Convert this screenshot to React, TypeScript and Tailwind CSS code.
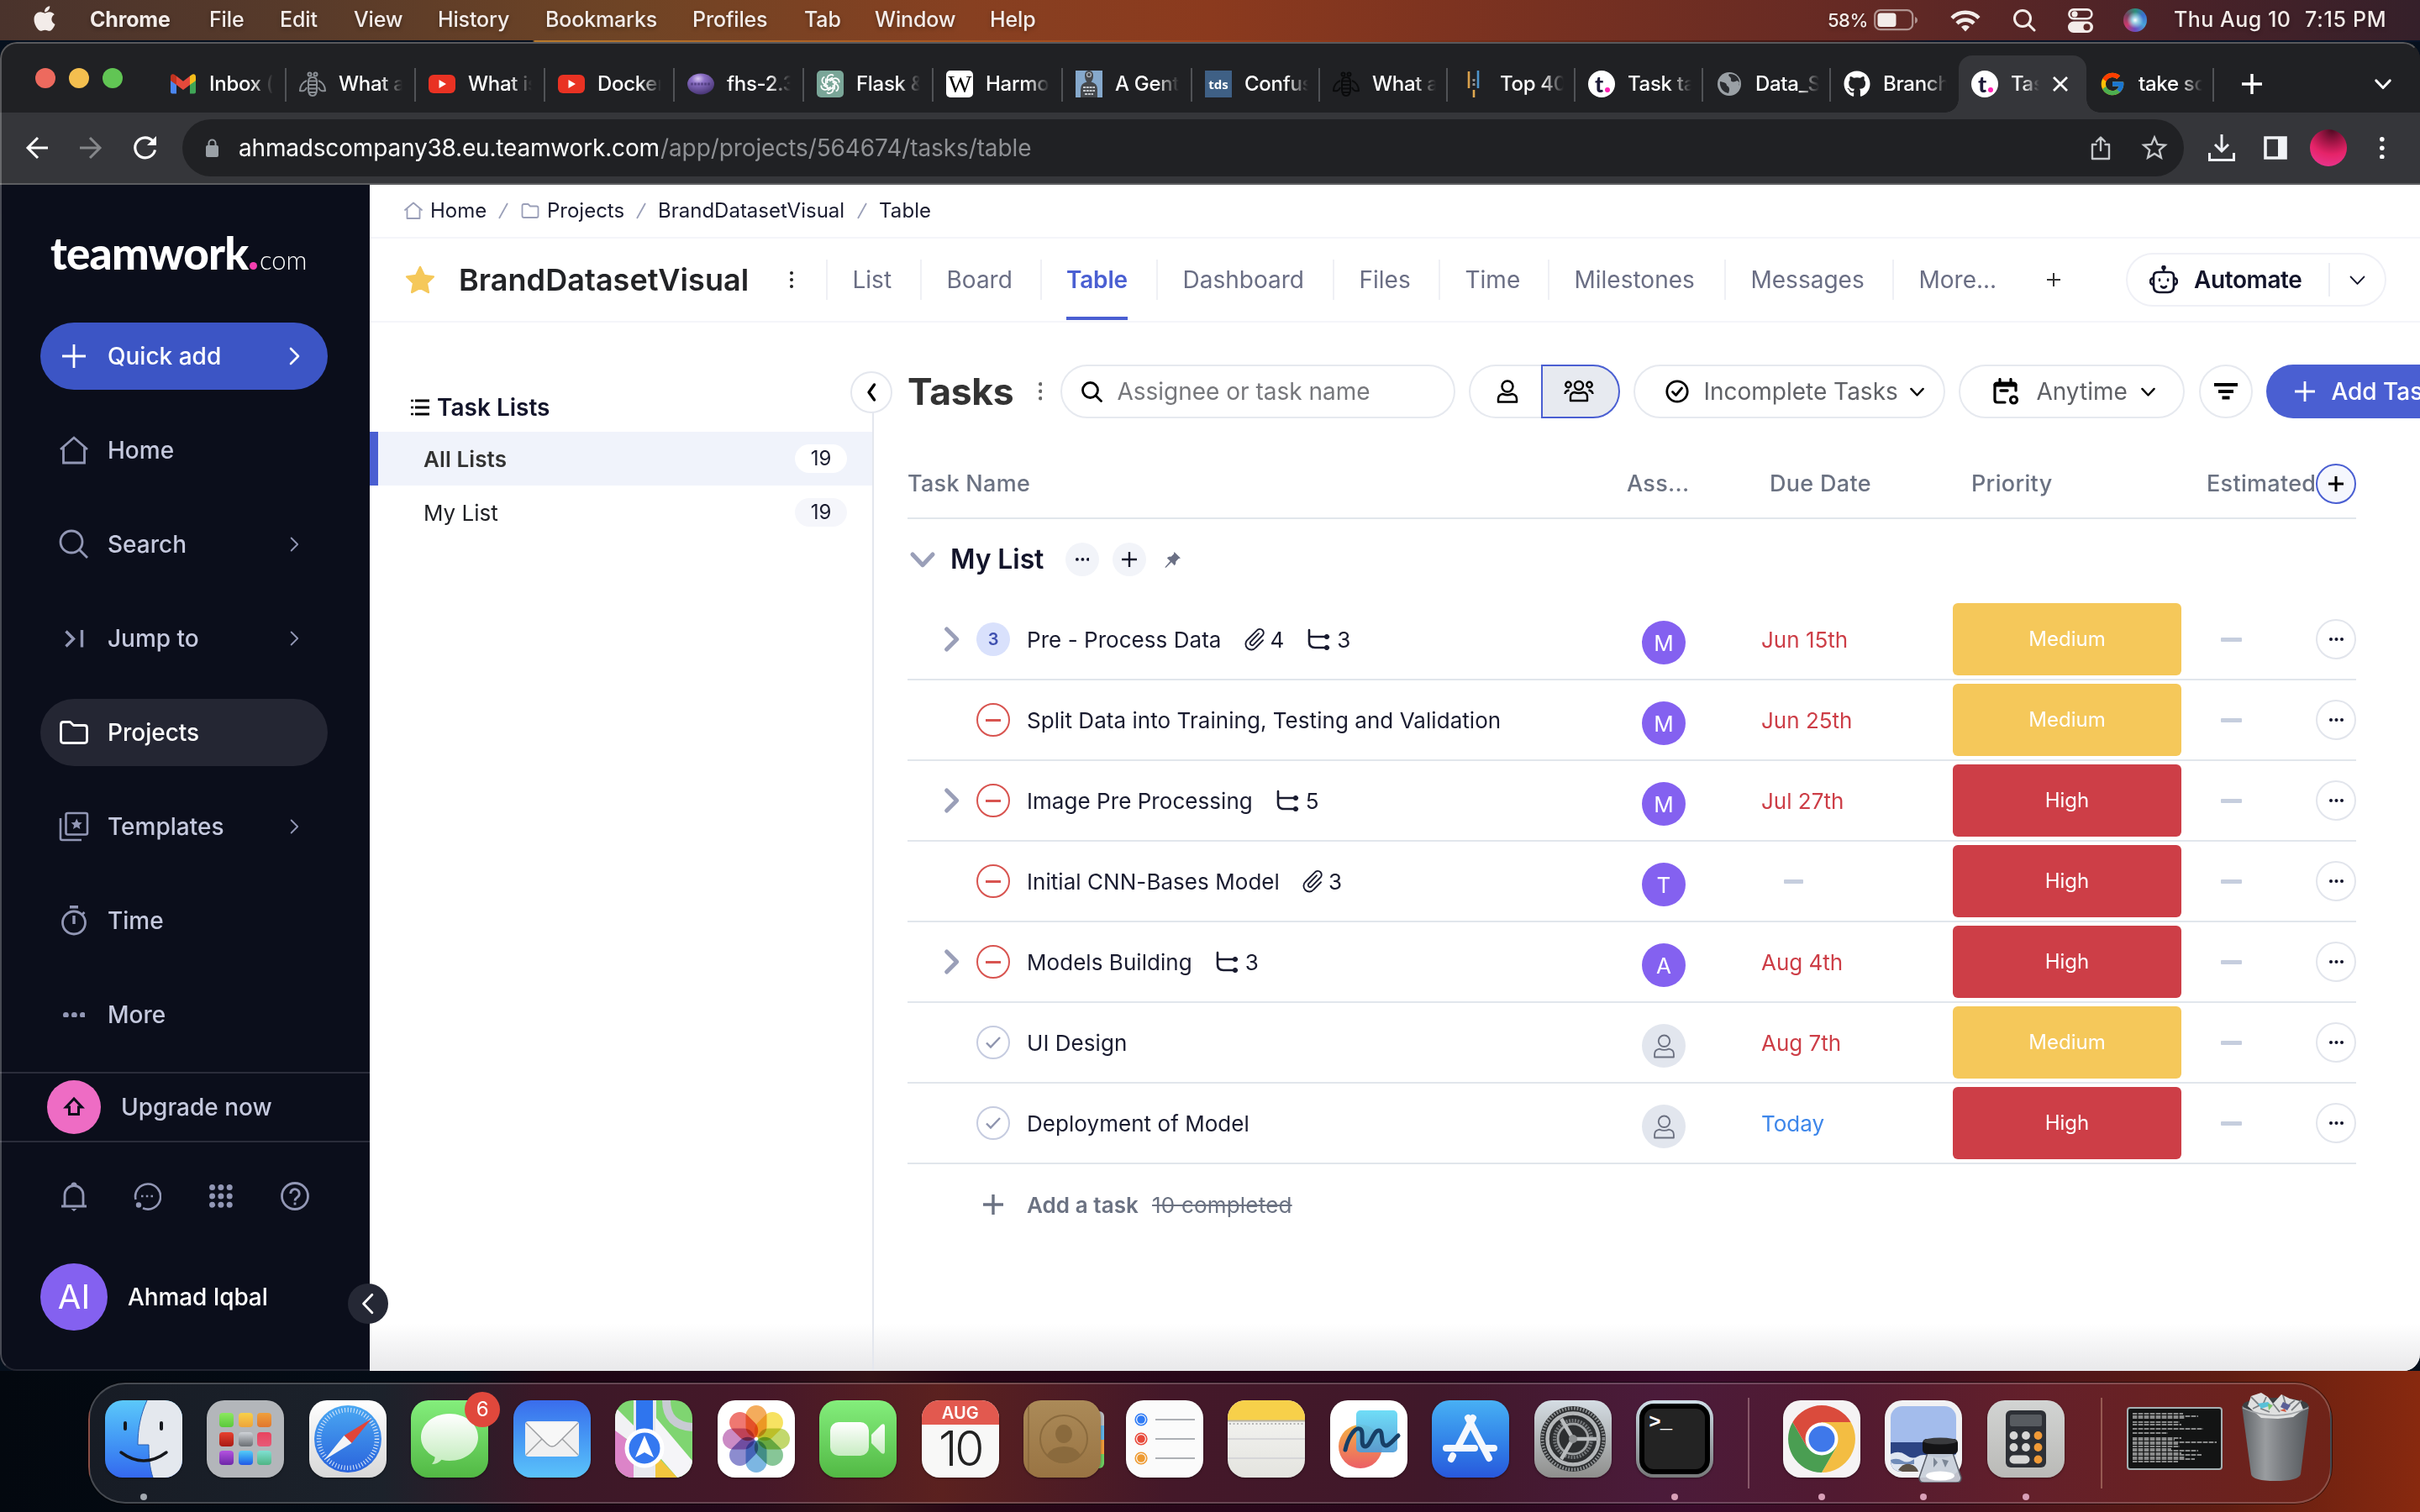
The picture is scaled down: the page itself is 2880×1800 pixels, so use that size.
import React from "react";
import { FaApple, FaGithub } from "react-icons/fa";
import { FcGoogle } from "react-icons/fc";

type Kids = { children?: React.ReactNode };

/* ---------- small drawing helpers ---------- */

function Line({
  size = 24,
  vb = 24,
  w = 2,
  className = "",
  round = true,
  children,
}: Kids & { size?: number; vb?: number; w?: number; className?: string; round?: boolean }) {
  return (
    <svg
      width={size}
      height={size}
      viewBox={`0 0 ${vb} ${vb}`}
      fill="none"
      stroke="currentColor"
      strokeWidth={w}
      strokeLinecap={round ? "round" : "butt"}
      strokeLinejoin={round ? "round" : "miter"}
      className={`block shrink-0 ${className}`}
    >
      {children}
    </svg>
  );
}

const Plus = ({ size, w, className }: { size: number; w: number; className?: string }) => (
  <Line size={size} vb={size} w={w} className={className} round={false}>
    <path d={`M${size / 2} 0V${size}M0 ${size / 2}H${size}`} />
  </Line>
);

const ChevR = ({ h, w, className }: { h: number; w: number; className?: string }) => (
  <Line size={h} vb={24} w={w} className={className}>
    <path d="M8 3l9 9-9 9" />
  </Line>
);

const ChevD = ({ size, w, className }: { size: number; w: number; className?: string }) => (
  <Line size={size} vb={24} w={w} className={className}>
    <path d="M3 7.500l9 9.500 9-9.500" />
  </Line>
);

const Dots = ({ r = 2, gap = 7, vertical = false, className = "" }: { r?: number; gap?: number; vertical?: boolean; className?: string }) => {
  const a = 2 * r;
  const b = 2 * gap + 2 * r;
  return (
    <svg width={vertical ? a : b} height={vertical ? b : a} fill="currentColor" className={`block shrink-0 ${className}`}>
      {[0, 1, 2].map((i) => (
        <circle key={i} cx={vertical ? r : r + i * gap} cy={vertical ? r + i * gap : r} r={r} />
      ))}
    </svg>
  );
};

/* ---------- macOS menu bar ---------- */

const menus = [
  { t: "Chrome", c: "w-[142px] font-bold tracking-[-0.3px]" },
  { t: "File", c: "w-[84px]" },
  { t: "Edit", c: "w-[88px]" },
  { t: "View", c: "w-[100px]" },
  { t: "History", c: "w-[128px]" },
  { t: "Bookmarks", c: "w-[175px]" },
  { t: "Profiles", c: "w-[133px]" },
  { t: "Tab", c: "w-[84px]" },
  { t: "Window", c: "w-[137px]" },
  { t: "Help", c: "w-[80px]" },
];

function MenuBar() {
  return (
    <header className="flex h-12 shrink-0 items-center bg-[linear-gradient(90deg,#4a332c_0%,#573a2a_12%,#6f4425_26%,#874021_40%,#8b3a1e_50%,#7d3320_60%,#662a24_76%,#4a2228_90%,#35202a_100%)] text-[25px] font-medium text-[#f3ece9] [text-shadow:0_2px_5px_rgba(0,0,0,0.35)]">
      <FaApple className="mb-1 ml-[38px] mr-[38px] h-[34px] w-[30px] shrink-0" />
      {menus.map((m) => (
        <div key={m.t} className={`shrink-0 pl-px tracking-[-0.15px] ${m.c}`}>
          {m.t}
        </div>
      ))}
      <div className="ml-auto flex items-center">
        <span className="w-[55px] text-[22px] tracking-[-0.5px]">58%</span>
        <svg width="53" height="26" viewBox="0 0 53 26" className="mr-[38px] block">
          <rect x="1.200" y="1.200" width="45" height="23" rx="6.500" fill="none" stroke="#f3ece9" strokeOpacity=".55" strokeWidth="2.200" />
          <rect x="4.500" y="4.500" width="22" height="16.500" rx="3.500" fill="#f3ece9" />
          <path d="M49 9q3 1.200 3 4t-3 4z" fill="#f3ece9" fillOpacity=".55" />
        </svg>
        <svg width="36" height="27" viewBox="0 0 36 27" className="mr-[38px] block" fill="none" stroke="#f3ece9" strokeWidth="4.600">
          <path d="M2 10.500a22.500 22.500 0 0 1 32 0" />
          <path d="M8 16.800a14 14 0 0 1 20 0" />
          <path d="M18 26.500l-5-5.500a7.500 7.500 0 0 1 10 0z" fill="#f3ece9" stroke="none" />
        </svg>
        <Line size={28} vb={28} w={3} className="mr-[38px]">
          <circle cx="12" cy="12" r="9.500" />
          <path d="M19 19l7 7" />
        </Line>
        <svg width="30" height="29" viewBox="0 0 30 29" className="mr-[36px] block">
          <rect x="1.400" y="1.400" width="27" height="10.800" rx="5.400" fill="none" stroke="#f3ece9" strokeWidth="2.600" />
          <circle cx="8" cy="6.800" r="3.600" fill="#f3ece9" />
          <rect x="0" y="15.500" width="30" height="13.500" rx="6.700" fill="#f3ece9" />
          <circle cx="22.500" cy="22.200" r="4" fill="#5b2726" />
        </svg>
        <div className="mr-[32px] h-7 w-7 rounded-full bg-[radial-gradient(circle_at_50%_50%,#ffffff_0%,#9fd4e6_18%,transparent_50%),conic-gradient(from_0deg,#2c8f7a,#3b6fd0,#4aa3d8,#6b4bc0,#c93a6b,#7a4060,#2c8f7a)]" />
        <span className="w-[156px] whitespace-nowrap tracking-[0.5px]">Thu Aug 10</span>
        <span className="w-[137px] whitespace-nowrap tracking-[0.7px]">7:15 PM</span>
      </div>
    </header>
  );
}

/* ---------- favicons ---------- */

const Gmail = () => (
  <svg width="32" height="32" viewBox="0 0 32 32">
    <path d="M1 8v17.500q0 2 2 2h5V13z" fill="#4a86f0" />
    <path d="M31 8v17.500q0 2-2 2h-5V13z" fill="#3fa556" />
    <path d="M24 6.500l3-2q4-1 4 3.500v4l-7 5z" fill="#f5bd1b" />
    <path d="M8 6.500l-3-2Q1 3.500 1 8v4l7 5z" fill="#c2331f" />
    <path d="M8 6.500l8 6.200 8-6.200V17l-8 6-8-6z" fill="#e6493b" />
  </svg>
);
const Bee = ({ c }: { c: string }) => (
  <svg width="32" height="32" viewBox="0 0 32 32" fill="none" stroke={c} strokeWidth="2">
    <circle cx="12.500" cy="4.500" r="2" />
    <circle cx="19.500" cy="4.500" r="2" />
    <path d="M11 13q0-5 5-5t5 5v9q0 8-5 8t-5-8z" />
    <path d="M11 12.500h10M11 17h10M11 21.500h10M12 26h8" />
    <path d="M9 12c-5 2-8 7-8 12 4 1 7-1 8-4M23 12c5 2 8 7 8 12-4 1-7-1-8-4" />
  </svg>
);
const YouTube = () => (
  <svg width="32" height="32" viewBox="0 0 32 32">
    <rect x="0" y="5" width="32" height="22" rx="6" fill="#e93223" />
    <path d="M12.500 11l8.500 5-8.500 5z" fill="#fff" />
  </svg>
);
const Eclipse = () => (
  <svg width="32" height="32" viewBox="0 0 32 32">
    <defs>
      <radialGradient id="ecl" cx=".4" cy=".25" r=".8">
        <stop offset="0" stopColor="#d9c8f2" />
        <stop offset=".3" stopColor="#8c70c6" />
        <stop offset="1" stopColor="#43316f" />
      </radialGradient>
    </defs>
    <ellipse cx="16" cy="16" rx="16" ry="12.500" fill="url(#ecl)" />
    <path d="M4 16h24" stroke="#2e2156" strokeWidth="3" strokeDasharray="3 1" opacity=".45" />
  </svg>
);
const Knot = () => (
  <svg width="32" height="32" viewBox="0 0 32 32">
    <rect width="32" height="32" rx="5" fill="#7aa698" />
    <g fill="none" stroke="#fff" strokeWidth="1.700">
      {[0, 60, 120, 180, 240, 300].map((a) => (
        <path key={a} d="M12.500 15V9.500a4.600 4.600 0 0 1 7.500-3.500M12.500 12l6.500-3.700" transform={`rotate(${a} 16 16)`} />
      ))}
    </g>
  </svg>
);
const Wiki = () => (
  <div className="flex h-8 w-8 items-center justify-center rounded-[5px] bg-white font-['Liberation_Serif',serif] text-[30px] leading-none tracking-[-1px] text-black">W</div>
);
const Person = () => (
  <svg width="32" height="32" viewBox="0 0 32 32">
    <rect width="32" height="32" fill="#86a9cc" />
    <path d="M11 6q0-6 5-6t5 6q0 5-2.500 7.500 7.500 1.500 7.500 9V32H6V22.500q0-7.500 7.500-9Q11 11 11 6z" fill="#45484c" />
    <circle cx="16" cy="5" r="2.500" fill="none" stroke="#b9bec4" strokeWidth="1.200" />
    <path d="M9 20h14M9 24h14M11 28h10" stroke="#c4c8cc" strokeWidth="2" strokeDasharray="3 .8" />
  </svg>
);
const Tds = () => (
  <div className="flex h-8 w-8 items-center justify-center bg-[#3f6085] font-['Open_Sans',sans-serif] text-[15px] font-bold text-white">tds</div>
);
const Bars = () => (
  <svg width="32" height="32" viewBox="0 0 32 32" strokeWidth="2.600">
    <path d="M10 1v20" stroke="#d9a04b" />
    <path d="M16 23v9M16 10v2M16 16v2" stroke="#e0a950" />
    <path d="M21 0v21" stroke="#4d95cc" />
    <path d="M16 10v8" stroke="#8d9299" strokeDasharray="3 2" />
  </svg>
);
const TeamworkFav = () => (
  <div className="relative flex h-8 w-8 items-center justify-center rounded-full bg-white pb-0.5 pr-1.5 font-['Lato',sans-serif] text-[27px] font-black leading-none text-[#1d1c39]">
    t<span className="absolute bottom-[6px] right-[6px] h-[6px] w-[6px] rounded-full bg-[#ff22b1]" />
  </div>
);
const Globe = () => (
  <svg width="32" height="32" viewBox="0 0 32 32">
    <circle cx="16" cy="16" r="14" fill="#9aa0a5" />
    <path d="M5 13c4 1 8 1 8 5 3 1 4 4 2 9-7-1-11-8-10-14zM16 4c-3 3 3 3 2 7-1 3 5 3 7 1 3 1 4 4 2 6C30 12 26 4 16 4z" fill="#2a2c30" />
  </svg>
);

const tabs: { icon: React.ReactNode; t: string; active?: boolean; noSep?: boolean }[] = [
  { icon: <Gmail />, t: "Inbox (" },
  { icon: <Bee c="#8b9096" />, t: "What a" },
  { icon: <YouTube />, t: "What is" },
  { icon: <YouTube />, t: "Docker" },
  { icon: <Eclipse />, t: "fhs-2.3" },
  { icon: <Knot />, t: "Flask &" },
  { icon: <Wiki />, t: "Harmo" },
  { icon: <Person />, t: "A Gent" },
  { icon: <Tds />, t: "Confus" },
  { icon: <Bee c="#0a0b0c" />, t: "What a" },
  { icon: <Bars />, t: "Top 40" },
  { icon: <TeamworkFav />, t: "Task ta" },
  { icon: <Globe />, t: "Data_S" },
  { icon: <FaGithub className="h-8 w-8 text-white" />, t: "Branch", noSep: true },
  { icon: <TeamworkFav />, t: "Tas", active: true, noSep: true },
  { icon: <FcGoogle className="h-8 w-8" />, t: "take sc" },
];

function TabStrip() {
  return (
    <div className="flex h-[84px] shrink-0 items-end bg-[#202124] pl-[42px]">
      <div className="mb-[29px] flex w-[145px] shrink-0 gap-4">
        <span className="h-6 w-6 rounded-full bg-[#ed6a5e]" />
        <span className="h-6 w-6 rounded-full bg-[#f4bf4f]" />
        <span className="h-6 w-6 rounded-full bg-[#61c554]" />
      </div>
      {tabs.map((tab, i) => (
        <div
          key={i}
          className={`relative flex h-[68px] shrink-0 items-center pl-[15px] text-[24px] text-white ${i < 8 ? "w-[154px]" : "w-[152px]"} ${tab.active ? "rounded-t-[16px] bg-[#35363a]" : ""}`}
        >
          {tab.active && (
            <>
              <span className="absolute -left-4 bottom-0 h-4 w-4 bg-[radial-gradient(circle_at_0_0,transparent_15.5px,#35363a_16px)]" />
              <span className="absolute -right-4 bottom-0 h-4 w-4 bg-[radial-gradient(circle_at_100%_0,transparent_15.5px,#35363a_16px)]" />
            </>
          )}
          <span className="flex h-8 w-8 shrink-0 items-center justify-center">{tab.icon}</span>
          <span
            className={`ml-[15px] overflow-hidden whitespace-nowrap font-medium tracking-[-0.3px] ${
              tab.active
                ? "w-[34px] [mask-image:linear-gradient(90deg,#000_40%,transparent)]"
                : "w-[76px] [mask-image:linear-gradient(90deg,#000_65%,transparent)]"
            }`}
          >
            {tab.t}
          </span>
          {tab.active && (
            <Line size={18} vb={18} w={2.8} className="ml-[16px]" round={false}>
              <path d="M1 1l16 16M17 1L1 17" />
            </Line>
          )}
          {!tab.noSep && <span className="absolute right-0 top-[15px] h-10 w-0.5 bg-[#505256]" />}
        </div>
      ))}
      <div className="mb-[22px] ml-[33px] flex flex-1 items-center justify-between pr-[33px] text-white">
        <Plus size={24} w={3.4} />
        <ChevD size={22} w={3.2} />
      </div>
    </div>
  );
}

function Toolbar() {
  return (
    <div className="flex h-[86px] shrink-0 items-center border-b-2 border-[#5c5d60] bg-[#35363a] pl-[30px]">
      <Line size={28} vb={28} w={3} round={false} className="mr-9 text-white">
        <path d="M27 14H3M15 2L3 14l12 12" />
      </Line>
      <Line size={28} vb={28} w={3} round={false} className="mr-9 text-[#85878a]">
        <path d="M1 14h24M13 2l12 12-12 12" />
      </Line>
      <Line size={30} vb={30} w={3.2} round={false} className="mr-[29px] text-white">
        <path d="M26.500 17.500A12 12 0 1 1 24 7.200" />
        <path d="M28 1v11H17z" fill="currentColor" stroke="none" />
      </Line>
      <div className="flex h-[68px] w-[2382px] items-center rounded-full bg-[#202124] pl-7">
        <svg width="15" height="22" viewBox="0 0 15 22" className="mr-[24px] shrink-0">
          <path d="M3.500 10V5.500a4 4 0 0 1 8 0V10" fill="none" stroke="#9aa0a6" strokeWidth="2" />
          <rect x="0" y="8" width="15" height="14" rx="2" fill="#9aa0a6" />
        </svg>
        <div className="flex text-[28px] text-[#8f9195]">
          <span className="w-[502px] whitespace-nowrap tracking-[-0.18px] text-white">ahmadscompany38.eu.teamwork.com</span>
          <span className="whitespace-nowrap tracking-[-0.1px]">/app/projects/564674/tasks/table</span>
        </div>
        <Line size={30} vb={30} w={2.4} className="ml-auto mr-[33px] text-[#c5c8cb]">
          <path d="M15 18V3M10 7.500l5-5 5 5M9.500 11H5v17h20V11h-4.500" />
        </Line>
        <Line size={32} vb={32} w={2.4} round={false} className="mr-[19px] text-[#c5c8cb]">
          <path d="M16 3.500l3.600 8.400 9.200.8-7 6 2.100 9-7.900-4.800-7.900 4.800 2.100-9-7-6 9.200-.8z" />
        </Line>
      </div>
      <Line size={32} vb={32} w={3} round={false} className="ml-[29px] text-[#eef0f6]">
        <path d="M16 0v19M8 12l8 8 8-8" strokeWidth="3" />
        <path d="M1.500 22v8.500h29V22" />
      </Line>
      <svg width="28" height="28" viewBox="0 0 28 28" className="ml-[34px]">
        <path d="M2 2h24v24H2z" fill="none" stroke="#f1f3f6" strokeWidth="3.600" />
        <path d="M17 2h9v24h-9z" fill="#f1f3f6" />
      </svg>
      <div className="ml-[27px] h-11 w-11 rounded-full bg-[radial-gradient(circle_at_60%_0%,#4d0b22_0%,#a01545_30%,#e52368_58%,#ea3c9c_100%)]" />
      <Dots r={2.8} gap={10.5} vertical className="ml-[39px] text-white" />
    </div>
  );
}

/* ---------- Teamwork sidebar ---------- */

const navIcons: Record<string, React.ReactNode> = {
  Home: (
    <Line size={36} vb={36} w={2.8} round={false}>
      <path d="M2 17L18 3l16 14M5.500 14.500V33h25V14.500" />
    </Line>
  ),
  Search: (
    <Line size={36} vb={36} w={2.8} round={false}>
      <circle cx="15" cy="15" r="13" />
      <path d="M24.500 24.500L34 34" />
    </Line>
  ),
  "Jump to": (
    <Line size={36} vb={36} w={3.4} round={false}>
      <path d="M8.500 9.500l9 9-9 9M27.500 8v20.500" />
    </Line>
  ),
  Projects: (
    <Line size={36} vb={36} w={2.8}>
      <path d="M2.500 8.500q0-3 3-3h8l4 4h13q3 0 3 3v15q0 3-3 3h-25q-3 0-3-3z" />
    </Line>
  ),
  Templates: (
    <Line size={36} vb={36} w={2.6} round={false}>
      <rect x="8.500" y="2" width="25.500" height="25.500" rx="2" />
      <path d="M2 8v24q0 2 2 2h23" />
      <path d="M21.200 8.500l2 4.400 4.600.4-3.500 3.100 1.100 4.600-4.200-2.500-4.200 2.500 1.100-4.600-3.500-3.100 4.600-.4z" fill="currentColor" stroke="none" />
    </Line>
  ),
  Time: (
    <Line size={36} vb={36} w={2.8} round={false}>
      <circle cx="18" cy="20.500" r="13.500" />
      <path d="M13 1.800h10M18 12v10" strokeWidth="3.400" />
      <path d="M27.500 11l3-3" />
    </Line>
  ),
  More: <Dots r={3.4} gap={10} />,
};

const nav: { t: string; arrow?: boolean; active?: boolean }[] = [
  { t: "Home" },
  { t: "Search", arrow: true },
  { t: "Jump to", arrow: true },
  { t: "Projects", active: true },
  { t: "Templates", arrow: true },
  { t: "Time" },
  { t: "More" },
];

function Sidebar() {
  return (
    <aside className="relative flex w-[440px] shrink-0 flex-col bg-[#0b0e1b] text-[28px] font-medium text-[#c5c9de]">
      <div className="ml-[60px] mt-[51px] flex h-[60px] items-baseline font-['Lato',sans-serif] leading-[60px] text-white">
        <span className="w-[237px] text-[53px] font-black tracking-[-0.8px]">teamwork</span>
        <span className="mr-[3px] h-[9px] w-[9px] rounded-full bg-[#f43fb0]" />
        <span className="text-[31px] font-light">com</span>
      </div>
      <div className="ml-12 mt-[53px] flex h-20 w-[342px] shrink-0 items-center rounded-full bg-[#3c55c5] text-white">
        <span className="flex w-20 justify-center">
          <Plus size={28} w={2.8} />
        </span>
        <span className="flex-1">Quick add</span>
        <ChevR h={24} w={2.6} className="mr-7" />
      </div>
      <div className="mt-8 flex flex-col gap-8">
        {nav.map((n) => (
          <div key={n.t} className={`ml-12 flex h-20 w-[342px] items-center rounded-full ${n.active ? "bg-[#242633] text-white" : ""}`}>
            <span className={`flex w-20 justify-center ${n.active ? "" : "text-[#9297b5]"}`}>{navIcons[n.t]}</span>
            <span className="flex-1">{n.t}</span>
            {n.arrow && <ChevR h={20} w={2.2} className="mr-[30px] text-[#9297b5]" />}
          </div>
        ))}
      </div>
      <div className="mt-[28px] flex h-[84px] items-center border-y-2 border-[#2a2c3a] pl-14">
        <span className="flex h-16 w-16 items-center justify-center rounded-full bg-[#ee6cc4] text-[#0b0e1b]">
          <Line size={28} vb={28} w={3} round={false}>
            <path d="M14 4L4.500 14H8.500v8.500h11V14h4z" />
          </Line>
        </span>
        <span className="ml-[24px]">Upgrade now</span>
      </div>
      <div className="mt-[44px] flex h-10 items-center text-[#9297b5]">
        <span className="ml-11 flex w-[87px] justify-center">
          <Line size={36} vb={36} w={2.8} round={false}>
            <path d="M3 30h30M7 29.500V16.500a11 11 0 0 1 22 0v13" />
            <path d="M14.500 5a3.500 3.500 0 0 1 7 0zM14.500 33h7l-3.500 3z" fill="currentColor" stroke="none" />
          </Line>
        </span>
        <span className="flex w-[87px] justify-center">
          <Line size={34} vb={34} w={2.6} round={false}>
            <path d="M12 31.200A15 15 0 1 0 3.500 21" />
            <circle cx="7" cy="27.500" r="3.200" fill="currentColor" stroke="none" />
            <path d="M10 17h2.500M15.800 17h2.500M21.500 17H24" />
          </Line>
        </span>
        <span className="flex w-[90px] justify-center">
          <svg width="28" height="28" viewBox="0 0 28 28" fill="currentColor">
            {[0, 1, 2].map((r) => [0, 1, 2].map((c) => <circle key={`${r}${c}`} cx={3.6 + c * 10.3} cy={3.6 + r * 10.3} r="3.500" />))}
          </svg>
        </span>
        <span className="flex w-[86px] justify-center">
          <Line size={36} vb={36} w={2.8} round={false}>
            <circle cx="18" cy="18" r="15.500" />
            <path d="M12.800 15a5.200 5.200 0 1 1 8.400 4c-2 1.500-3.200 2.200-3.200 4.500M18 25.500v3" />
          </Line>
        </span>
      </div>
      <div className="ml-12 mt-[60px] flex h-20 items-center text-white">
        <span className="flex h-20 w-20 items-center justify-center rounded-full bg-[#8461f0] text-[40px] font-normal">AI</span>
        <span className="ml-[24px] tracking-[-0.1px]">Ahmad Iqbal</span>
      </div>
      <span className="absolute -right-[22px] top-[1308px] z-10 flex h-12 w-12 items-center justify-center rounded-full bg-[#252835] text-white">
        <Line size={26} vb={24} w={2.6}>
          <path d="M16.500 2L7 12l9.500 10" />
        </Line>
      </span>
    </aside>
  );
}

/* ---------- Project header ---------- */

function Breadcrumb() {
  const slash = (
    <svg width="12" height="20" viewBox="0 0 12 20" fill="none" stroke="#9a9fb8" strokeWidth="1.800" className="shrink-0">
      <path d="M11 1L1 19" />
    </svg>
  );
  return (
    <div className="flex h-16 shrink-0 items-center border-b-2 border-[#f4f5fa] pl-[41px] text-[24px] text-[#1a1c30]">
      <Line size={22} vb={22} w={1.8} className="mr-[9px] text-[#9a9fb8]">
        <path d="M1 10l10-8.500L21 10M3.500 8.500V20h15V8.500" />
      </Line>
      <span className="w-[81px]">Home</span>
      {slash}
      <Line size={22} vb={22} w={1.8} className="ml-[15px] mr-[9px] text-[#9a9fb8]">
        <path d="M1.500 5q0-2 2-2h5l2.500 2.500h7.500q2 0 2 2v9.500q0 2-2 2h-15q-2 0-2-2z" />
      </Line>
      <span className="w-[106px]">Projects</span>
      {slash}
      <span className="ml-[14px] w-[237px]">BrandDatasetVisual</span>
      {slash}
      <span className="ml-[14px] tracking-[0.1px]">Table</span>
    </div>
  );
}

const projectTabs = [
  { t: "List", c: "w-[112px]" },
  { t: "Board", c: "w-[143px]" },
  { t: "Table", c: "w-[138px]", active: true },
  { t: "Dashboard", c: "w-[210px]" },
  { t: "Files", c: "w-[126px]" },
  { t: "Time", c: "w-[130px]" },
  { t: "Milestones", c: "w-[210px]" },
  { t: "Messages", c: "w-[200px]" },
  { t: "More...", c: "w-[122px]" },
];

function ProjectHeader() {
  return (
    <div className="flex h-[100px] shrink-0 items-center border-b-2 border-[#f4f5fa]">
      <svg width="36" height="34" viewBox="0 0 36 34" className="ml-[42px] mr-[28px] block shrink-0">
        <path d="M18 2l4.800 10 11 1.400-8 7.700 2 10.900L18 26.700 8.200 32l2-10.900-8-7.700 11-1.400z" fill="#f5c85a" stroke="#f5c85a" strokeWidth="2.500" strokeLinejoin="round" />
      </svg>
      <span className="w-[394px] whitespace-nowrap text-[36px] font-semibold tracking-[0.06px] text-[#222326]">BrandDatasetVisual</span>
      <Dots r={2} gap={8} vertical className="mr-[39px] text-[#222]" />
      {projectTabs.map((p) => (
        <div key={p.t} className={`flex h-12 shrink-0 items-center whitespace-nowrap border-l-2 border-[#eff0f5] text-[28px] ${p.c} ${p.active ? "pl-[29px]" : "pl-[29.5px]"}`}>
          <span className={p.active ? "relative font-semibold tracking-[-0.2px] text-[#4a5fd2]" : "text-[#6a6e84]"}>
            {p.t}
            {p.active && <span className="absolute -bottom-[27px] left-0 h-1 w-full bg-[#4a5fd2]" />}
          </span>
        </div>
      ))}
      <Plus size={16} w={2} className="ml-[62px] text-[#333]" />
      <div className="ml-auto mr-[40px] flex h-16 w-[310px] items-center rounded-full border-2 border-[#eff0f6] text-[#12142a]">
        <Line size={34} vb={34} w={2.6} className="ml-[26px] mr-[19px]">
          <path d="M17 2v6M10 8h14q5 0 5 5v12q0 7-7 7H12q-7 0-7-7V13q0-5 5-5zM4 15q-3 1-3 4t3 4M30 15q3 1 3 4t-3 4M14 25q3 3 6 0M12 16.500v1.500M22 16.500v1.500" />
          <circle cx="17" cy="2.500" r="1.500" fill="currentColor" />
        </Line>
        <span className="w-[160px] text-[28px] font-semibold tracking-[-0.4px]">Automate</span>
        <span className="h-10 w-0.5 bg-[#ebedf3]" />
        <ChevD size={21} w={2.2} className="ml-[22px]" />
      </div>
    </div>
  );
}

/* ---------- Task lists panel ---------- */

function TaskLists() {
  return (
    <div className="flex w-[598px] shrink-0 flex-col pt-[72px]">
      <div className="flex h-[58px] items-center pl-[49px] text-[28px] font-semibold text-[#12142a]">
        <svg width="22" height="20" viewBox="0 0 22 20" className="mr-[9px]" stroke="#000" strokeWidth="3.200">
          <path d="M5 2h17M5 10h17M5 18h17" />
          <path d="M0 2h3M0 10h3M0 18h3" strokeWidth="2.500" />
        </svg>
        Task Lists
      </div>
      <div className="flex h-16 items-center border-l-[10px] border-[#4a5fd2] bg-[#f0f3fb] pl-[54px] pr-[30px] text-[26px] font-semibold text-[#333]">
        <span className="flex-1 tracking-[0.1px]">All Lists</span>
        <span className="flex h-[34px] w-[62px] items-center justify-center rounded-full bg-white text-[24px] font-normal text-[#1a1c30]">19</span>
      </div>
      <div className="flex h-16 items-center pl-16 pr-[30px] text-[26px] text-[#1f2024]">
        <span className="flex-1">My List</span>
        <span className="flex h-[34px] w-[62px] items-center justify-center rounded-full bg-[#f5f6fb] text-[24px] text-[#1a1c30]">19</span>
      </div>
    </div>
  );
}

/* ---------- Task table ---------- */

const User = ({ size, w, className }: { size: number; w: number; className?: string }) => (
  <Line size={size} vb={28} w={w} className={className}>
    <circle cx="14" cy="8" r="6.500" />
    <path d="M3 26.500V23q0-5 5.500-6 5.500 2.500 11 0 5.500 1 5.500 6v3.500z" />
  </Line>
);

function Filters() {
  const pill = "flex h-16 shrink-0 items-center rounded-full border-2 border-[#e6e9ef]";
  return (
    <div className="flex h-16 shrink-0 items-center text-[28px] text-[#5f6166]">
      <span className="w-[156px] shrink-0 text-[44.5px] font-bold tracking-[-0.3px] text-[#333]">Tasks</span>
      <Dots r={2.2} gap={8.5} vertical className="mr-[22px] text-[#666]" />
      <div className={`${pill} w-[470px] pl-[23px]`}>
        <Line size={25} vb={25} w={2.8} className="mr-[17px] text-black">
          <circle cx="10.500" cy="10.500" r="9" />
          <path d="M17.500 17.500l6 6" />
        </Line>
        <span className="text-[#76777b]">Assignee or task name</span>
      </div>
      <div className="ml-4 flex h-16 w-[180px] shrink-0 text-black">
        <span className="flex w-[86px] items-center justify-center rounded-l-full border-y-2 border-l-2 border-[#e6e9ef] pl-1">
          <User size={28} w={2.5} />
        </span>
        <span className="flex flex-1 items-center justify-center rounded-r-full border-2 border-[#4a5fd2] bg-[#e7eaf0] pr-1">
          <svg width="36" height="28" viewBox="0 0 36 28" fill="none" stroke="#000" strokeWidth="2.400" strokeLinejoin="round">
            <circle cx="18" cy="7" r="5" />
            <circle cx="5.500" cy="6" r="3.200" />
            <circle cx="30.500" cy="6" r="3.200" />
            <path d="M8 25v-5q0-4 4.500-5 5.500 2 11 0 4.500 1 4.500 5v5zM1.500 17q0-3.500 5-4.500M34.500 17q0-3.500-5-4.500" />
          </svg>
        </span>
      </div>
      <div className={`${pill} ml-4 w-[371px] pl-[36px]`}>
        <Line size={28} vb={28} w={2.8} className="mr-[17px] text-black">
          <circle cx="14" cy="14" r="12.200" />
          <path d="M8.500 14.500l4 4 7-8.500" />
        </Line>
        <span className="w-[245px] whitespace-nowrap">Incomplete Tasks</span>
        <ChevD size={19} w={3} className="text-black" />
      </div>
      <div className={`${pill} ml-4 w-[269px] pl-[38px]`}>
        <Line size={32} vb={32} w={3.2} className="mr-[20px] text-black">
          <path d="M28 15V9q0-3-3-3H6Q3 6 3 9v17q0 3 3 3h9M9 1.500v4M22 1.500v4" />
          <path d="M4 8h23" strokeWidth="5" />
          <path d="M10 15h8" strokeWidth="3.400" />
          <circle cx="25.500" cy="26" r="4" />
        </Line>
        <span className="w-[124px] whitespace-nowrap">Anytime</span>
        <ChevD size={19} w={3} className="text-black" />
      </div>
      <div className={`${pill} ml-[17px] w-16 justify-center`}>
        <svg width="28" height="20" viewBox="0 0 28 20" stroke="#000" strokeWidth="3.800">
          <path d="M0 2h28M5 10h18M9.500 17.500h9" />
        </svg>
      </div>
      <div className="ml-4 flex h-16 w-[280px] shrink-0 items-center rounded-l-full bg-[#4a5fd2] pl-[34px] text-white">
        <Plus size={24} w={2.8} className="mr-[19px]" />
        <span className="whitespace-nowrap font-medium">Add Task</span>
      </div>
    </div>
  );
}

type Task = {
  name: string;
  expand?: boolean;
  status: "num" | "stop" | "todo";
  files?: number;
  subs?: number;
  who?: string;
  due?: string;
  today?: boolean;
  high?: boolean;
};

const tasks: Task[] = [
  { name: "Pre - Process Data", expand: true, status: "num", files: 4, subs: 3, who: "M", due: "Jun 15th" },
  { name: "Split Data into Training, Testing and Validation", status: "stop", who: "M", due: "Jun 25th" },
  { name: "Image Pre Processing", expand: true, status: "stop", subs: 5, who: "M", due: "Jul 27th", high: true },
  { name: "Initial CNN-Bases Model", status: "stop", files: 3, who: "T", high: true },
  { name: "Models Building", expand: true, status: "stop", subs: 3, who: "A", due: "Aug 4th", high: true },
  { name: "UI Design", status: "todo", due: "Aug 7th" },
  { name: "Deployment of Model", status: "todo", due: "Today", today: true, high: true },
];

function Status({ kind }: { kind: Task["status"] }) {
  if (kind === "num")
    return <span className="flex h-10 w-10 items-center justify-center rounded-full bg-[#d9e1fc] text-[20px] font-semibold text-[#3f50b0]">3</span>;
  if (kind === "stop")
    return (
      <span className="flex h-10 w-10 items-center justify-center rounded-full border-2 border-[#d85450]">
        <span className="h-[3px] w-[18px] bg-[#d85450]" />
      </span>
    );
  return (
    <span className="flex h-10 w-10 items-center justify-center rounded-full border-2 border-[#c6cce0] text-[#8e94ae]">
      <Line size={20} vb={20} w={2.4} round={false}>
        <path d="M2 10.500l5 5L18 4" />
      </Line>
    </span>
  );
}

function TaskRow({ t }: { t: Task }) {
  return (
    <div className="flex h-24 shrink-0 items-center border-b-2 border-[#e1e6ec] text-[26px] text-[#1a1c30]">
      <div className="flex w-[874px] items-center">
        <span className="flex w-[82px] pl-[36px]">{t.expand && <ChevR h={32} w={3.8} className="text-[#9a9fb8]" />}</span>
        <Status kind={t.status} />
        <span className="ml-[20px] whitespace-nowrap tracking-[0.05px]">{t.name}</span>
        {t.files && (
          <span className="ml-[24px] flex items-center">
            <Line size={30} vb={24} w={1.5} className="mr-[4px]">
              <path d="M16 6.500L8 14.800a2 2 0 0 0 2.700 2.700l8.500-8.700a3.600 3.600 0 1 0-5-5.100L5.500 12.400a5.400 5.400 0 1 0 7.600 7.600L20 13" />
            </Line>
            {t.files}
          </span>
        )}
        {t.subs && (
          <span className="ml-[28px] flex items-center">
            <Line size={27} vb={27} w={2.6} className="mr-[8px]">
              <path d="M2 2v14q0 7 7 7h13M2 10h20" />
              <circle cx="23" cy="10" r="2.600" fill="currentColor" strokeWidth="1" />
              <circle cx="23" cy="23" r="2.600" fill="currentColor" strokeWidth="1" />
            </Line>
            {t.subs}
          </span>
        )}
      </div>
      <span className={`mt-2 flex h-[52px] w-[52px] items-center justify-center rounded-full ${t.who ? "bg-[#8461f0] text-white" : "bg-[#e2e6ee] text-[#6b7080]"}`}>
        {t.who ?? <User size={29} w={1.8} />}
      </span>
      <span className={`ml-[90px] w-[228px] ${t.today ? "text-[#3d86ea]" : "text-[#cd3e47]"}`}>
        {t.due ?? <span className="ml-[27px] block h-[5px] w-[23px] rounded-[1px] bg-[#c6cede]" />}
      </span>
      <span
        className={`flex h-[86px] w-[272px] items-center justify-center rounded-[6px] text-[24px] text-white ${t.high ? "bg-[#cd3e47]" : "bg-[#f5c85a]"}`}
      >
        {t.high ? "High" : "Medium"}
      </span>
      <span className="ml-[47px] h-[5px] w-[25px] rounded-[1px] bg-[#c6cede]" />
      <span className="ml-auto flex h-12 w-12 items-center justify-center rounded-full border-2 border-[#e2e5ec] text-[#12142a]">
        <Dots r={2} gap={6.5} />
      </span>
    </div>
  );
}

function TaskTable() {
  return (
    <div className="flex min-w-0 flex-1 flex-col overflow-hidden pl-[40px] pt-[50px]">
      <Filters />
      <div className="mt-[38px] flex h-[82px] w-[1724px] shrink-0 items-center border-b-2 border-[#e1e6ec] text-[27px] font-medium tracking-[0.3px] text-[#6b7282]">
        <span className="w-[856px]">Task Name</span>
        <span className="w-[170px]">Ass...</span>
        <span className="w-[240px]">Due Date</span>
        <span className="w-[280px]">Priority</span>
        <span className="w-[130px] overflow-hidden">Estimated</span>
        <span className="flex h-12 w-12 shrink-0 items-center justify-center rounded-full border-2 border-[#4a5fd2] bg-[#f5f7fd] text-black">
          <Plus size={18} w={3} />
        </span>
      </div>
      <div className="flex h-24 shrink-0 items-center">
        <ChevD size={32} w={3.8} className="ml-[2px] text-[#9a9fb8]" />
        <span className="ml-[17px] w-[137px] text-[32px] font-semibold tracking-[-0.1px] text-[#12142a]">My List</span>
        <span className="flex h-10 w-10 items-center justify-center rounded-full bg-[#f2f4f9] text-[#12142a]">
          <Dots r={1.9} gap={6.5} />
        </span>
        <span className="ml-4 flex h-10 w-10 items-center justify-center rounded-full bg-[#f2f4f9] text-[#12142a]">
          <Plus size={18} w={2.4} />
        </span>
        <svg width="19" height="19" viewBox="0 0 20 20" className="ml-[22px]" fill="#6b7085">
          <path d="M12 0l8 8-2.500.5-3.500 3.500q.5 3-1.500 5L8.500 13 2 19.500.5 20l.5-1.500L7 11.500 3 7.500q2-2 5-1.500L11.500 2.500z" />
        </svg>
      </div>
      <div className="flex w-[1724px] flex-col">
        {tasks.map((t) => (
          <TaskRow key={t.name} t={t} />
        ))}
      </div>
      <div className="flex h-24 shrink-0 items-center pl-[90px] text-[26px] text-[#6b7282]">
        <Plus size={24} w={3.4} />
        <span className="ml-[28px] w-[149px] font-semibold tracking-[0.05px]">Add a task</span>
        <span className="tracking-[0.2px] line-through">10 completed</span>
      </div>
    </div>
  );
}

/* ---------- Dock ---------- */

function Tile({ children, bg = "", badge }: Kids & { bg?: string; badge?: string }) {
  return (
    <div className={`relative h-[92px] w-[92px] rounded-[21px] shadow-[0_1px_3px_rgba(0,0,0,0.4)] ${bg}`}>
      <div className="h-full w-full overflow-hidden rounded-[21px]">{children}</div>
      {badge && (
        <span className="absolute -right-[14px] -top-[10px] flex h-[42px] w-[42px] items-center justify-center rounded-full bg-[#e0483c] text-[24px] text-white">
          {badge}
        </span>
      )}
    </div>
  );
}

const Art = ({ children }: Kids) => (
  <svg width="92" height="92" viewBox="0 0 92 92" className="block">
    {children}
  </svg>
);

const petals = ["#f29a38", "#f5dc3f", "#b4d04c", "#6cba80", "#5fa6dc", "#7373c4", "#c072b8", "#ec5a52"];
const padColors = ["from-[#8be85f] to-[#5ac93c]", "from-[#f7d04a] to-[#eda43a]", "from-[#efa03c] to-[#e0762e]", "from-[#e8412f] to-[#a81a14]", "from-[#cfd3d8] to-[#6b6f74]", "from-[#e9435e] to-[#e65a78]", "from-[#b452e0] to-[#6e28a8]", "from-[#56ccf7] to-[#2557e6]", "from-[#7fe0d2] to-[#4fb585]"];

const dockMain: { el: React.ReactNode; run?: boolean }[] = [
  {
    run: true,
    el: (
      <Tile bg="bg-gradient-to-b from-[#5cc8fa] to-[#3568ee]">
        <Art>
          <path d="M50 0C42 18 39 34 39 53h13c0 14 1 27 5 39h35V0z" fill="#e4e8ee" />
          <path d="M50 0C42 18 39 34 39 53h13c0 14 1 27 5 39" fill="none" stroke="#2a5fb0" strokeWidth="1" />
          <path d="M24 27v7M67 27v7" stroke="#15171c" strokeWidth="4" strokeLinecap="round" />
          <path d="M19 62q27 20 54 0" fill="none" stroke="#15171c" strokeWidth="3.500" strokeLinecap="round" />
        </Art>
      </Tile>
    ),
  },
  {
    el: (
      <Tile bg="bg-[#b3b6ba]">
        <div className="grid h-full grid-cols-3 place-content-center justify-center gap-x-[5px] gap-y-[5.5px] px-[15px]">
          {padColors.map((c) => (
            <span key={c} className={`h-[17px] w-[17px] rounded-[4px] bg-gradient-to-b ${c}`} />
          ))}
        </div>
      </Tile>
    ),
  },
  {
    el: (
      <Tile bg="bg-gradient-to-b from-white to-[#d8d8d8]">
        <Art>
          <defs>
            <linearGradient id="saf" x1="0" y1="0" x2="0" y2="1">
              <stop offset="0" stopColor="#4aa8f2" />
              <stop offset="1" stopColor="#2a63dc" />
            </linearGradient>
          </defs>
          <circle cx="46" cy="46" r="40" fill="url(#saf)" />
          <circle cx="46" cy="46" r="34.500" fill="none" stroke="#dfeaf8" strokeWidth="5.500" strokeDasharray="1 2.600" />
          <path d="M74 22L50.500 51 41.500 42z" fill="#e0453a" />
          <path d="M18 71l23.500-29 9 9z" fill="#f3f5f7" />
        </Art>
      </Tile>
    ),
  },
  {
    el: (
      <Tile bg="bg-gradient-to-b from-[#84ee7c] to-[#52b944]" badge="6">
        <Art>
          <defs>
            <linearGradient id="msg" x1="0" y1="0" x2="0" y2="1">
              <stop offset="0" stopColor="#fff" />
              <stop offset="1" stopColor="#c3ecbd" />
            </linearGradient>
          </defs>
          <path d="M46 16c19 0 34 12 34 28S65 72 46 72q-5 0-9.500-1.200Q32 76 25 76q4-4 3.500-8.500C18 62 12 54 12 44c0-16 15-28 34-28z" fill="url(#msg)" />
        </Art>
      </Tile>
    ),
  },
  {
    el: (
      <Tile bg="bg-gradient-to-b from-[#3a6cec] to-[#5bc3fa]">
        <Art>
          <rect x="14" y="25" width="64" height="42" rx="4" fill="#f0f0f1" />
          <path d="M15 65l22-22M77 65L55 43" stroke="#a0a2a5" strokeWidth="1.500" />
          <path d="M15 27l25 25q6 6 12 0l25-25" fill="#f7f7f7" stroke="#9c9ea2" strokeWidth="1.500" />
        </Art>
      </Tile>
    ),
  },
  {
    el: (
      <Tile bg="bg-[#7fd571]">
        <Art>
          <path d="M0 34l22 20v38H0z" fill="#dc84c8" />
          <path d="M0 8l22 22v22L0 36z" fill="#f1f1f4" />
          <path d="M22 0h27v92H22z" fill="#e8e9ee" />
          <path d="M25 0h20v50H25z" fill="#2f75ee" />
          <path d="M48 20l44 52v20H74L48 62z" fill="#f5f5f8" />
          <path d="M48 64l26 28H48z" fill="#f2c63e" />
          <path d="M61 0q0 30 31 32" fill="none" stroke="#c8cbd3" strokeWidth="10" />
          <circle cx="35" cy="57" r="21" fill="#3478f0" stroke="#fff" strokeWidth="5" />
          <path d="M35 42l11 26-11-6-11 6z" fill="#fff" />
        </Art>
      </Tile>
    ),
  },
  {
    el: (
      <Tile bg="bg-white">
        <Art>
          {petals.map((c, i) => (
            <rect key={c} x="33.500" y="6" width="25" height="38" rx="12.500" fill={c} fillOpacity=".82" transform={`rotate(${i * 45} 46 46)`} className="mix-blend-multiply" />
          ))}
        </Art>
      </Tile>
    ),
  },
  {
    el: (
      <Tile bg="bg-gradient-to-b from-[#84ee7c] to-[#52b944]">
        <Art>
          <defs>
            <linearGradient id="ft" x1="0" y1="0" x2="0" y2="1">
              <stop offset="0" stopColor="#fff" />
              <stop offset="1" stopColor="#c8ecc2" />
            </linearGradient>
          </defs>
          <rect x="13" y="26" width="46" height="40" rx="10" fill="url(#ft)" />
          <path d="M62 41l12-12q4-2 4 2v30q0 4-4 2L62 51z" fill="url(#ft)" />
        </Art>
      </Tile>
    ),
  },
  {
    el: (
      <Tile bg="bg-[#f8f8f7]">
        <div className="flex h-[29px] items-center justify-center bg-[#e2594f] text-[20px] font-semibold text-white">AUG</div>
        <div className="text-center text-[57px] font-light leading-[58px] tracking-[-3px] text-[#222]">10</div>
      </Tile>
    ),
  },
  {
    el: (
      <div className="relative">
        <div className="absolute -right-[4px] top-[13px] flex h-[68px] w-4 flex-col overflow-hidden rounded-r-[6px]">
          <span className="flex-1 bg-[#b9bcc0]" />
          <span className="flex-1 bg-[#5fb4e8]" />
          <span className="flex-1 bg-[#ee9b3a]" />
          <span className="flex-1 bg-[#6ccb5f]" />
        </div>
        <Tile bg="bg-gradient-to-b from-[#ab8a58] to-[#997443]">
          <Art>
            <path d="M6 0v92" stroke="#8a683c" strokeWidth="1.500" />
            <circle cx="48" cy="46" r="28" fill="none" stroke="#8a6a3d" strokeWidth="2" />
            <ellipse cx="48" cy="40" rx="10" ry="11" fill="#8a6a3d" />
            <path d="M28 65q6-10 20-10t20 10q-8 10-20 10T28 65z" fill="#8a6a3d" />
          </Art>
        </Tile>
      </div>
    ),
  },
  {
    el: (
      <Tile bg="bg-[#fbfbfb]">
        <Art>
          {["#2f7bf5", "#e8493a", "#ee9a31"].map((c, i) => (
            <g key={c}>
              <circle cx="18" cy={23 + i * 23} r="6.800" fill="none" stroke={c} strokeWidth="1.600" />
              <circle cx="18" cy={23 + i * 23} r="4.800" fill={c} />
              <path d={`M35 ${23 + i * 23}h47`} stroke="#adb0b5" strokeWidth="2" />
            </g>
          ))}
        </Art>
      </Tile>
    ),
  },
  {
    el: (
      <Tile bg="bg-gradient-to-b from-[#f6f6f4] to-[#e4e4df]">
        <Art>
          <path d="M0 0h92v24H0z" fill="#f7d04a" />
          <path d="M0 24.500h92" stroke="#b9b4a4" strokeWidth="2" />
          <path d="M2 28h88" stroke="#b4b4b4" strokeWidth="2" strokeDasharray="2 2.500" />
          <path d="M0 46h92M0 69h92" stroke="#cfcfd4" strokeWidth="1.600" />
        </Art>
      </Tile>
    ),
  },
  {
    el: (
      <Tile bg="bg-white">
        <Art>
          <defs>
            <linearGradient id="ff1" x1="0" y1="0" x2="0" y2="1">
              <stop offset="0" stopColor="#f3b044" />
              <stop offset="1" stopColor="#ec5f66" />
            </linearGradient>
            <linearGradient id="ff2" x1="0" y1="0" x2="0" y2="1">
              <stop offset="0" stopColor="#63daf6" />
              <stop offset="1" stopColor="#4e9cd8" />
            </linearGradient>
          </defs>
          <circle cx="36" cy="55" r="26" fill="url(#ff1)" />
          <rect x="31" y="12" width="49" height="50" rx="5" fill="url(#ff2)" fillOpacity=".92" />
          <path d="M18 59c3-14 11-27 17-25 7 2-1 21 7 21 6 0 9-19 16-19 6 0 1 17 8 18 5 0 9-7 15-12" fill="none" stroke="#173f66" strokeWidth="5" strokeLinecap="round" />
        </Art>
      </Tile>
    ),
  },
  {
    el: (
      <Tile bg="bg-gradient-to-b from-[#48b0f4] to-[#2958dc]">
        <Art>
          <g stroke="#f5f8fd" strokeWidth="8" strokeLinecap="round">
            <path d="M49 21L32 54M43 21l25 48M17 57h34M62 57h12M25 66l-2 4" />
          </g>
        </Art>
      </Tile>
    ),
  },
  {
    el: (
      <Tile bg="bg-gradient-to-b from-[#d5dde4] to-[#8f8f8d]">
        <Art>
          <circle cx="46" cy="46" r="39" fill="#2d2f31" />
          <circle cx="46" cy="46" r="36.500" fill="none" stroke="#8d9092" strokeWidth="4" strokeDasharray="1.800 1.800" />
          <circle cx="46" cy="46" r="30.500" fill="none" stroke="#b4b7b9" strokeWidth="4.500" />
          <circle cx="46" cy="46" r="22" fill="none" stroke="#74777a" strokeWidth="4" strokeDasharray="2 1.500" />
          <circle cx="46" cy="46" r="18" fill="none" stroke="#a0a3a5" strokeWidth="3" />
          <path d="M46 46h28M46 46L32 22M46 46L32 70" stroke="#b9bcbe" strokeWidth="4.500" />
          <circle cx="46" cy="46" r="5" fill="#8d9092" />
        </Art>
      </Tile>
    ),
  },
  {
    run: true,
    el: (
      <Tile bg="bg-gradient-to-b from-[#cfdee8] to-[#77797a]">
        <div className="m-[4px] h-[84px] w-[84px] rounded-[17px] border-[6px] border-black bg-[#232323] pl-[5px] pt-[3px] font-['Liberation_Mono',monospace] text-[24px] font-bold leading-[28px] tracking-[-1px] text-white">
          &gt;_
        </div>
      </Tile>
    ),
  },
];

const dockRunning: React.ReactNode[] = [
  <Tile key="chrome" bg="bg-[#f5f3f4]">
    <Art>
      <path d="M46 26H80.600A40 40 0 0 1 46 86L63.300 56z" fill="#f3bd42" />
      <path d="M63.300 56L46 86A40 40 0 0 1 11.400 26L28.700 56z" fill="#4a9e52" />
      <path d="M28.700 56L11.400 26A40 40 0 0 1 80.600 26H46z" fill="#da4b3c" />
      <circle cx="46" cy="46" r="19.500" fill="#fff" />
      <circle cx="46" cy="46" r="15.500" fill="#3f78ea" />
    </Art>
  </Tile>,
  <div key="preview" className="relative">
    <Tile bg="bg-[#f1f1f3]">
      <Art>
        <rect x="7" y="7" width="78" height="78" rx="14" fill="#a3bcec" />
        <path d="M7 50h78v22q0 13-14 13H21Q7 85 7 71z" fill="#2c4484" />
        <path d="M7 64q10-5 18 1t14 2 18 0 28-3v8q0 13-14 13H21Q7 85 7 71z" fill="#dfe6f1" />
        <path d="M7 71q8-3 14 1t14-2v6H14q-7 0-7-5z" fill="#6f8bb8" />
        <path d="M16 83q6-9 14-7t10 9H21z" fill="#5c5247" />
      </Art>
    </Tile>
    <svg width="56" height="54" viewBox="0 0 56 54" className="absolute -bottom-[6px] -right-[2px]">
      <path d="M14 16h28l11 32q0 6-6 6H9q-6 0-6-6z" fill="#c9d0da" fillOpacity=".92" stroke="#595e68" strokeWidth="1.500" />
      <path d="M20 24l5 6-5 6zM30 26l8 2-4 8z" fill="#7c8796" />
      <ellipse cx="28" cy="46" rx="17" ry="5.500" fill="#fff" />
      <rect x="7" y="2" width="42" height="18" rx="5" fill="#141416" />
      <ellipse cx="28" cy="4.500" rx="20" ry="4" fill="#3a3b3e" />
    </svg>
  </div>,
  <Tile key="calc" bg="bg-gradient-to-b from-[#d2d4d3] to-[#babab7]">
    <Art>
      <rect x="22" y="12" width="48" height="68" rx="6" fill="#2d3036" />
      <rect x="27" y="17" width="38" height="14" rx="2.500" fill="#575b60" />
      {[0, 1].map((r) =>
        [0, 1, 2].map((c) => <circle key={`${r}${c}`} cx={31.5 + c * 14.5} cy={42 + r * 14} r="4.900" fill={c === 2 ? "#f09a37" : "#d6d6d5"} />)
      )}
      <rect x="26.500" y="65.500" width="24" height="10" rx="5" fill="#d6d6d5" />
      <circle cx="60.500" cy="70.500" r="4.900" fill="#f09a37" />
    </Art>
  </Tile>,
];

function DockItem({ children, run, dot = "bg-[#d9a0b8]" }: Kids & { run?: boolean; dot?: string }) {
  return (
    <div className="flex w-[121.5px] shrink-0 flex-col items-center pt-[19px]">
      {children}
      {run && <span className={`mt-[19px] h-2 w-2 rounded-full ${dot}`} />}
    </div>
  );
}

const termLines = [60, 78, 62, 0, 56, 58, 0, 84, 0, 42, 0, 58, 50, 100, 54, 56, 46, 78, 58, 82, 62, 74, 54];

function Dock() {
  return (
    <div className="flex h-[168px] shrink-0 justify-center bg-[linear-gradient(90deg,#03080f_0%,#050d17_19%,#1d0412_23%,#22081a_30%,#331216_36%,#260616_40%,#2b081e_62%,#3a0c2c_70%,#42101f_80%,#5f1d12_92%,#88290f_100%)] pt-[14px]">
      <div className="flex h-[144px] w-[2670px] rounded-[44px] border-2 border-white/20 bg-[linear-gradient(90deg,#171c25_0%,#1c222b_13%,#3a1827_20%,#461829_30%,#5b211f_38%,#441829_48%,#40182a_60%,#4b1b3a_70%,#511a31_78%,#64202a_87%,#6f2318_100%)] pl-[3px] shadow-[0_0_0_1px_rgba(0,0,0,0.5)]">
        {dockMain.map((d, i) => (
          <DockItem key={i} run={d.run} dot={i === 0 ? "bg-[#a3a9b0]" : "bg-[#d9a0b8]"}>
            {d.el}
          </DockItem>
        ))}
        <span className="ml-[26px] mr-[25px] mt-4 h-[108px] w-0.5 bg-[#88586a]" />
        {dockRunning.map((d, i) => (
          <DockItem key={i} run>
            {d}
          </DockItem>
        ))}
        <span className="ml-[28px] mr-[29px] mt-4 h-[108px] w-0.5 bg-[#965a52]" />
        <div className="mt-[27px] flex h-[75px] w-[114px] shrink-0 flex-col rounded-[4px] border-2 border-[#a4b0b2] bg-[#131414] px-[5px] pt-[5px]">
          {termLines.map((w, i) => (
            <span key={i} className="mb-[0.6px] h-[2px] shrink-0 bg-[repeating-linear-gradient(90deg,#8a8b8b_0_5px,#3c3d3d_5px_7px)]" style={{ width: `${w}%` }} />
          ))}
        </div>
        <svg width="82" height="108" viewBox="0 0 82 108" className="ml-[22px] mt-[9px] shrink-0">
          <defs>
            <linearGradient id="can" x1="0" y1="0" x2="1" y2="0">
              <stop offset="0" stopColor="#5e6266" />
              <stop offset=".35" stopColor="#9a9da0" />
              <stop offset=".6" stopColor="#7b7e82" />
              <stop offset="1" stopColor="#55595d" />
            </linearGradient>
          </defs>
          <path d="M1 17q40-16 80 0L71 98q-3 8-30 8T12 98z" fill="url(#can)" />
          <ellipse cx="41" cy="16" rx="39" ry="9" fill="#3d4043" />
          <path d="M8 17l4-12 12-4 8 5 6 8 10-11 10 5 12 3 4 10-12 9-18 2-20-1z" fill="#dfe0e0" />
          <path d="M12 6l10 10-8 4M30 6l-6 14 10 4M50 4l4 14 10-8M60 22l12-12M38 14l8 10" stroke="#7c7f82" strokeWidth="1.800" fill="none" />
          <path d="M20 14l12-2 4 4-12 4z" fill="#58c0d8" />
          <path d="M50 12l9 4-4 6-8-4z" fill="#5a5f96" />
          <path d="M32 14l6 2-5 6z" fill="#7cc46a" />
          <path d="M46 22l6-2 2 4z" fill="#cf5a44" />
          <path d="M2 19q39 18 78 0" fill="none" stroke="#a3a6a9" strokeWidth="1.500" />
        </svg>
      </div>
    </div>
  );
}

/* ---------- Page ---------- */

export default function App() {
  return (
    <div className="flex h-[1800px] w-[2880px] flex-col overflow-hidden bg-[#06101d] font-['Inter','Liberation_Sans',sans-serif] leading-normal">
      <MenuBar />
      <div className="h-0.5 shrink-0 bg-[linear-gradient(90deg,#04101f_0%,#04101f_22%,#b87a2c_22.1%,#a0401a_50%,#3a1414_76%,#081428_80%,#081428_100%)]" />
      <div className="relative flex h-[1582px] shrink-0 flex-col overflow-hidden rounded-[20px] bg-[#202124]">
        <TabStrip />
        <Toolbar />
        <div className="flex h-[1412px] shrink-0">
          <Sidebar />
          <main className="flex min-w-0 flex-1 flex-col bg-white">
            <Breadcrumb />
            <ProjectHeader />
            <div className="flex flex-1 bg-[linear-gradient(180deg,transparent_95.5%,#e8e8ea_100%)]">
              <TaskLists />
              <div className="relative mt-[60px] w-0.5 bg-[#e4e7ee]">
                <span className="absolute -left-[26px] -top-[2px] flex h-[50px] w-[50px] items-center justify-center rounded-full border-2 border-[#e4e7ee] bg-white text-black">
                  <Line size={24} vb={24} w={3.4}>
                    <path d="M15.500 3L9 12l6.500 9" />
                  </Line>
                </span>
              </div>
              <TaskTable />
            </div>
          </main>
        </div>
        <div className="pointer-events-none absolute inset-0 rounded-[20px] border-2 border-white/25 border-r-transparent border-b-white/10" />
      </div>
      <Dock />
    </div>
  );
}
